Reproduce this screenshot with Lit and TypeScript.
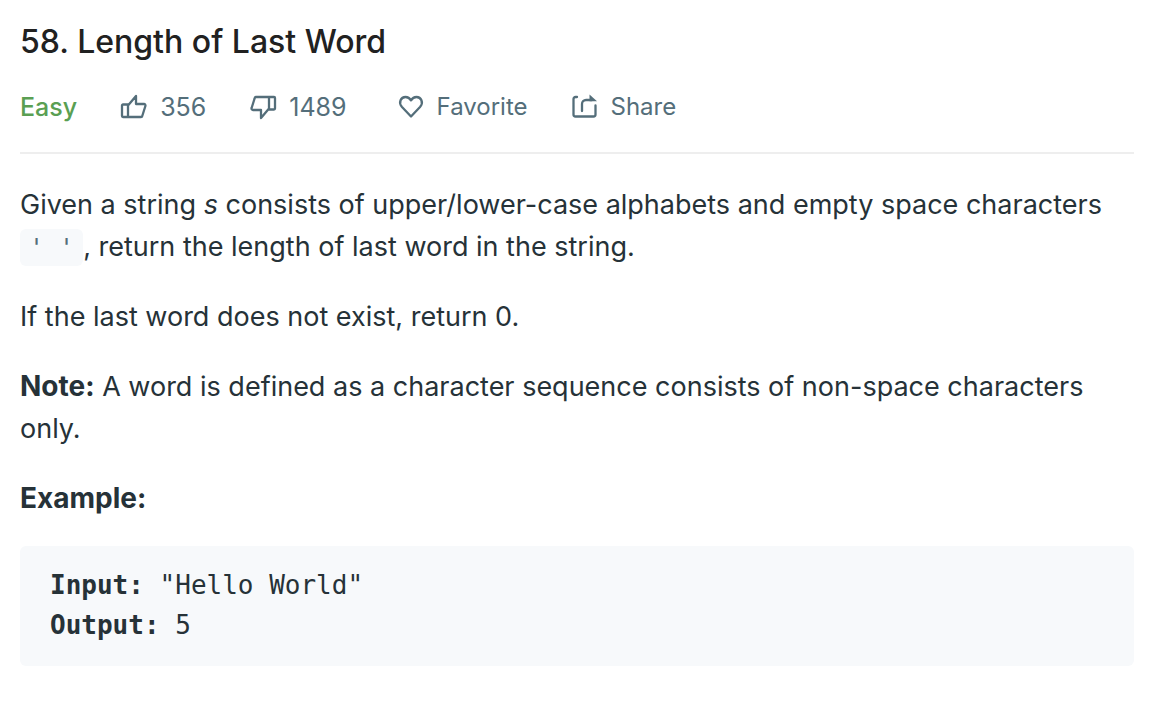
import { LitElement, html, css } from "lit";
import { customElement } from "lit/decorators.js";

@customElement("app-root")
export class AppRoot extends LitElement {
  static styles = css`
    :host { display: block; background: #fff; color: #263238; font: 27px/42px Inter, sans-serif; }
    .page { padding: 21px 20px 20px; }
    .title { margin: 0; font-size: 32px; line-height: 42px; font-weight: 550; color: #212121; }
    .meta, .votes { display: flex; flex-wrap: wrap; align-items: center; column-gap: 44px; }
    .meta { margin-top: 24px; padding-bottom: 25px; border-bottom: 2px solid #eee; font-size: 24px; line-height: 40px; }
    .votes { padding-right: 7px; }
    .level { font-size: 25px; font-weight: 500; color: #5a9f53; }
    .action { display: flex; align-items: center; gap: 13px; padding: 0; border: 0; background: none; font: inherit; color: #546e7a; cursor: pointer; }
    .count { font-size: 25px; }
    .icon { width: 26px; height: 26px; fill: none; stroke: currentColor; stroke-width: 2.3; stroke-linejoin: round; stroke-linecap: round; overflow: visible; }
    .tip { fill: currentColor; stroke: none; }
    .content { padding-top: 30px; }
    p { margin: 0 0 28px; }
    strong { font-size: 28px; line-height: 30px; font-weight: 700; }
    .label { margin-bottom: 26px; }
    code { padding: 4px 9px; border-radius: 6px; background: #f7f9fb; color: #546e7a; font: 25px/30px "DejaVu Sans Mono", monospace; white-space: pre; }
    pre { margin: 0; padding: 19px 30px 21px; border-radius: 6px; background: #f7f9fb; font: 26px/40px "DejaVu Sans Mono", monospace; white-space: pre-wrap; }
    pre strong { font-size: inherit; line-height: inherit; }
  `;

  render() {
    return html`
      <main class="page">
        <h1 class="title">58. Length of Last Word</h1>
        <div class="meta">
          <span class="level">Easy</span>
          <div class="votes">
            <button class="action count" aria-label="Like 356"><svg class="icon" viewBox="0 0 26 26"><path d="M2 10.500h5V23H2a1 1 0 0 1-1-1V11.500a1 1 0 0 1 1-1zM7 11.500L15 2v8h8a1.500 1.500 0 0 1 1.400 2l-3 9.500A1.500 1.500 0 0 1 20 23H7"/></svg>356</button>
            <button class="action count" aria-label="Dislike 1489"><svg class="icon" viewBox="0 0 26 26"><path d="M24 15.500h-5V3h5a1 1 0 0 1 1 1v10.500a1 1 0 0 1-1 1zM19 14.500L11 24v-8H3a1.500 1.500 0 0 1-1.400-2l3-9.500A1.500 1.500 0 0 1 6 3h13"/></svg>1489</button>
          </div>
          <button class="action"><svg class="icon" viewBox="0 0 26 26"><path d="M13 22.500L4 13C0 8.500 3 3 7.500 3c2.400 0 4.300 1.300 5.500 3.300C14.200 4.300 16.100 3 18.500 3 23 3 26 8.500 22 13z"/></svg>Favorite</button>
          <button class="action"><svg class="icon" viewBox="0 0 26 26"><path d="M5 3H3.500a2 2 0 0 0-2 2v15.500a2 2 0 0 0 2 2h18a2 2 0 0 0 2-2V11.500M10 17v-7a4 4 0 0 1 4-4H20"/><path class="tip" d="M17.500 0.500L25 7.200h-7.500z"/></svg>Share</button>
        </div>
        <div class="content">
          <p>Given a string <em>s</em> consists of upper/lower-case alphabets and empty space characters <code>' '</code>, return the length of last word in the string.</p>
          <p>If the last word does not exist, return 0.</p>
          <p><strong>Note:</strong> A word is defined as a character sequence consists of non-space characters only.</p>
          <p class="label"><strong>Example:</strong></p>
          <pre><strong>Input:</strong> "Hello World"
<strong>Output:</strong> 5</pre>
        </div>
      </main>
    `;
  }
}
